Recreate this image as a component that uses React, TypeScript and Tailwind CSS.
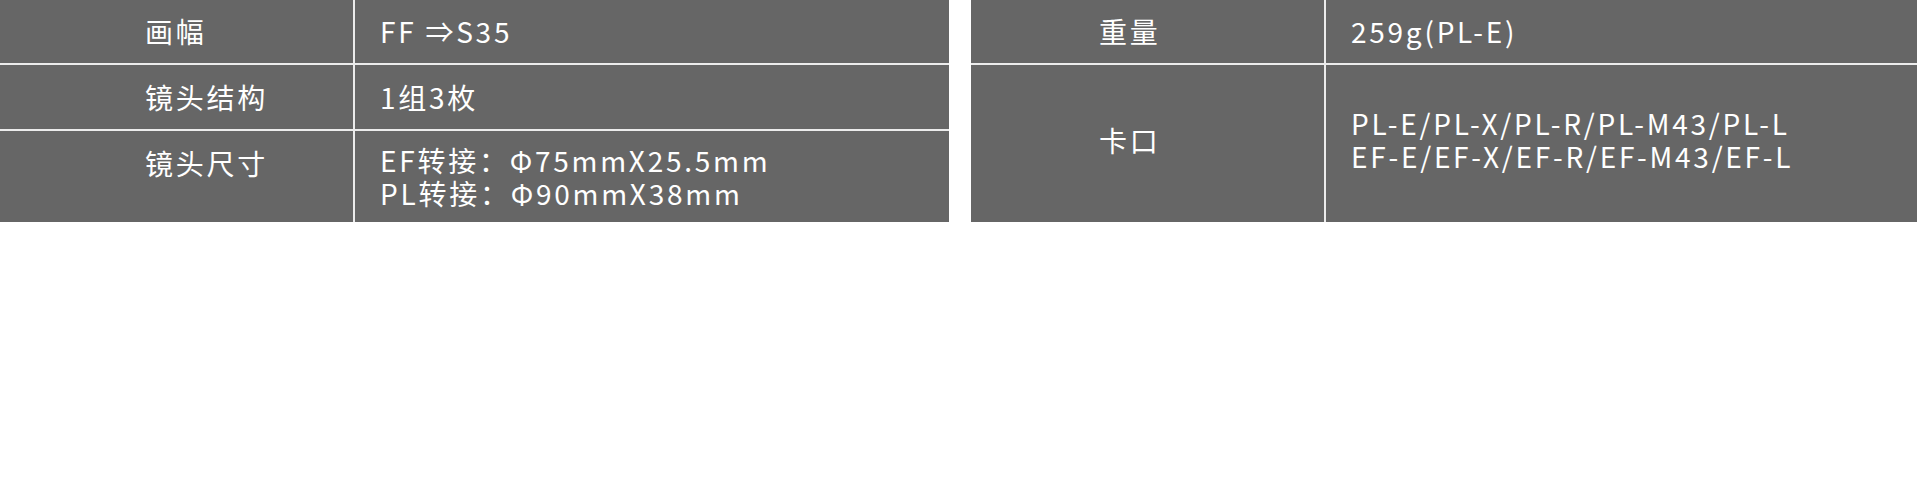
import React from 'react';

const font = { fontFamily: '"Noto Sans CJK SC", "Noto Sans", sans-serif' };

type Row = { label: string; value: string[]; h: string; labelTop?: boolean; pb?: string };

const leftRows: Row[] = [
  { label: '画幅', value: ['FF ⇒S35'], h: 'h-[63px]' },
  { label: '镜头结构', value: ['1组3枚'], h: 'h-[64px]' },
  { label: '镜头尺寸', value: ['EF转接：Φ75mmX25.5mm', 'PL转接：Φ90mmX38mm'], h: 'h-[91px]', labelTop: true },
];

const rightRows: Row[] = [
  { label: '重量', value: ['259g(PL-E)'], h: 'h-[63px]' },
  { label: '卡口', value: ['PL-E/PL-X/PL-R/PL-M43/PL-L', 'EF-E/EF-X/EF-R/EF-M43/EF-L'], h: 'h-[157px]', pb: 'pb-[7px]' },
];

function SpecTable({ rows, labelPad }: { rows: Row[]; labelPad: string }) {
  return (
    <div className="flex flex-col gap-[2px] bg-[#ececec]">
      {rows.map((row) => (
        <div key={row.label} className={`flex gap-[2px] ${row.h}`}>
          <div
            className={`w-[353px] shrink-0 bg-[#666666] flex ${
              row.labelTop ? 'items-start pt-[16px]' : 'items-center'
            } ${labelPad} ${row.pb ?? ''}`}
          >
            <span className="text-[28px] leading-[33px] tracking-[2.75px] text-white">{row.label}</span>
          </div>
          <div className={`flex-1 bg-[#666666] flex flex-col justify-center pl-[25px] ${row.pb ?? ''}`}>
            {row.value.map((line) => (
              <span key={line} className="text-[28px] leading-[33px] tracking-[2.75px] text-white whitespace-nowrap">
                {line}
              </span>
            ))}
          </div>
        </div>
      ))}
    </div>
  );
}

export default function App() {
  return (
    <div className="w-[1917px] h-[482px] bg-white" style={font}>
      <div className="flex gap-[22px]">
        <div className="w-[949px]">
          <SpecTable rows={leftRows} labelPad="pl-[145px]" />
        </div>
        <div className="flex-1">
          <SpecTable rows={rightRows} labelPad="pl-[128px]" />
        </div>
      </div>
    </div>
  );
}
